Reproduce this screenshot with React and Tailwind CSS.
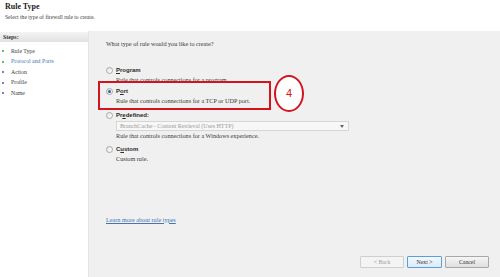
import React from "react";

const serif = { fontFamily: '"Liberation Serif", "Times New Roman", serif' };

function Radio({ checked }) {
  return (
    <span className="relative mt-[1px] flex h-[7px] w-[7px] shrink-0 items-center justify-center rounded-full border border-[#a8a8a8] bg-gradient-to-br from-[#e4e4e4] to-white">
      {checked && <span className="h-[3px] w-[3px] rounded-full bg-[#2a62b8]" />}
    </span>
  );
}

function Option({ label, ul, checked, desc, children }) {
  const before = label.slice(0, ul);
  const mid = label.slice(ul, ul + 1);
  const after = label.slice(ul + 1);
  return (
    <div className="flex gap-[3px]">
      <Radio checked={checked} />
      <div className="flex flex-col">
        <span className="font-['Liberation_Sans',sans-serif] text-[6px] font-bold leading-[9px] text-[#2a2a2a]">
          {before}
          <span className="underline">{mid}</span>
          {after}
        </span>
        {children}
        <span className="text-[6.2px] leading-[9px] text-[#3a3a3a]">{desc}</span>
      </div>
    </div>
  );
}

const steps = [
  { name: "Rule Type", dot: "bg-[#3aa53a]", text: "text-[#3a3a3a]" },
  { name: "Protocol and Ports", dot: "bg-[#3aa53a]", text: "text-[#4474b4]" },
  { name: "Action", dot: "bg-[#5a4fb0]", text: "text-[#3a3a3a]" },
  { name: "Profile", dot: "bg-[#5a4fb0]", text: "text-[#3a3a3a]" },
  { name: "Name", dot: "bg-[#5a4fb0]", text: "text-[#3a3a3a]" },
];

export default function App() {
  return (
    <div className="flex h-[277px] w-[500px] flex-col overflow-hidden bg-white" style={serif}>
      <div className="flex h-[31px] flex-col pl-[5px] pt-[1px]">
        <span className="text-[8px] font-bold leading-[11px] text-[#222]">Rule Type</span>
        <span className="mt-[1px] text-[5.6px] leading-[8px] text-[#3a3a3a]">
          Select the type of firewall rule to create.
        </span>
      </div>

      <div className="flex flex-1">
        <div className="w-[88px] shrink-0 bg-white">
          <div className="mt-[1px] flex h-[10px] items-center bg-gradient-to-b from-[#f4f4f4] to-[#e2e2e2] pl-[3px] text-[6px] font-bold text-[#333]">
            Steps:
          </div>
          <div className="mt-[4px] flex flex-col">
            {steps.map((s) => (
              <div key={s.name} className="flex h-[10.5px] items-center">
                <span className={`ml-[2px] h-[2px] w-[2px] rounded-full ${s.dot}`} />
                <span className={`ml-[7px] text-[5.8px] ${s.text}`}>{s.name}</span>
              </div>
            ))}
          </div>
        </div>

        <div className="relative flex flex-1 flex-col border-l border-[#e4e4e4] bg-[#f0f0f0] pl-[17px]">
          <div className="mt-[9px] text-[6.2px] leading-[8px] text-[#3a3a3a]">
            What type of rule would you like to create?
          </div>

          <div className="mt-[17.5px] flex flex-col">
            <Option label="Program" ul={0} desc="Rule that controls connections for a program." />
            <div className="mt-[3px]">
              <Option label="Port" ul={1} checked desc="Rule that controls connections for a TCP or UDP port." />
            </div>
            <div className="mt-[6px]">
              <Option
                label="Predefined:"
                ul={2}
                desc="Rule that controls connections for a Windows experience."
              >
                <div className="mt-[1.5px] flex h-[10px] w-[233px] items-center justify-between border border-[#d6d6d6] bg-[#f7f7f7] pl-[3px] pr-[4px]">
                  <span className="text-[6px] text-[#9a9a9a]">BranchCache - Content Retrieval (Uses HTTP)</span>
                  <span className="h-0 w-0 border-x-[2.5px] border-t-[3px] border-x-transparent border-t-[#666]" />
                </div>
              </Option>
            </div>
            <div className="mt-[4.5px]">
              <Option label="Custom" ul={1} desc="Custom rule." />
            </div>
          </div>

          <a className="mt-[52px] w-fit text-[6.2px] leading-[9px] text-[#4474b4] underline">
            Learn more about rule types
          </a>

          <div className="mt-auto mb-[9px] flex justify-end gap-[3px] pr-[11px]">
            <button className="h-[12px] w-[44px] rounded-[1px] border border-[#cfcfcf] bg-[#f4f4f4] text-[5.8px] text-[#a0a0a0]">
              &lt; Back
            </button>
            <button className="h-[12px] w-[35px] rounded-[1px] border border-[#5aa0d8] bg-gradient-to-b from-[#f2f8fd] to-[#dceaf6] text-[5.8px] text-[#333]">
              Next &gt;
            </button>
            <button className="h-[12px] w-[44px] rounded-[1px] border border-[#a8a8a8] bg-gradient-to-b from-[#f6f6f6] to-[#dedede] text-[5.8px] text-[#333]">
              Cancel
            </button>
          </div>

          <div className="absolute left-[9px] top-[50px] h-[29px] w-[173px] border-2 border-[#d2141e]" />
          <div className="absolute left-[185px] top-[44px] flex h-[37px] w-[30px] items-center justify-center rounded-[50%] border-2 border-[#d2141e] bg-white font-['Liberation_Sans',sans-serif] text-[11px] text-[#d2141e]">
            4
          </div>
        </div>
      </div>
    </div>
  );
}
